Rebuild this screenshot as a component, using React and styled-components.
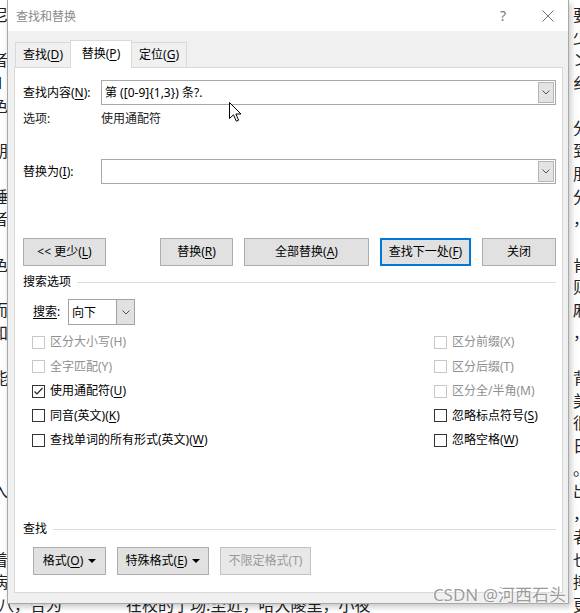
import React from 'react';
import styled, { createGlobalStyle } from 'styled-components';

const GlobalStyle = createGlobalStyle`
  html, body {
    margin: 0;
    padding: 0;
    background: #fff;
  }
  body {
    font-family: "Noto Sans", "Noto Sans CJK SC", sans-serif;
    font-size: 12px;
    color: #000;
    overflow: hidden;
  }
`;

const Screen = styled.div`
  position: relative;
  width: 580px;
  height: 613px;
  overflow: hidden;
  background: #fff;
`;

// document behind the dialog
const DocPage = styled.div`
  display: flex;
  flex-direction: column;
  padding-top: 3px;
  font-family: "Noto Sans CJK SC", sans-serif;
  font-size: 16px;
  color: #222;
`;

const DocLine = styled.div`
  height: 22.7px;
  line-height: 22.7px;
  display: flex;
  justify-content: space-between;
  margin: 0 -9px 0 -8px;
  white-space: nowrap;
`;

const DocChar = styled.span`
  width: 16px;
  text-align: center;
`;

const DocTail = styled.span`
  flex: 1;
  padding-left: ${(p) => p.indent}px;
`;

const Dialog = styled.div`
  position: absolute;
  left: 7px;
  top: 0;
  width: 562px;
  height: 604px;
  box-sizing: border-box;
  background: #f0f0f0;
  border: 1px solid #a8a8a8;
  border-top: none;
  box-shadow: 2px 3px 6px rgba(0, 0, 0, 0.22);
  display: flex;
  flex-direction: column;
`;

const TitleBar = styled.div`
  height: 31px;
  flex-shrink: 0;
  background: #fff;
  display: flex;
  align-items: center;
  padding-left: 8px;
  color: #8a8a8a;
`;

const TitleText = styled.div`
  flex: 1;
  font-size: 12px;
`;

const TitleButton = styled.div`
  width: ${(p) => p.w}px;
  margin-right: ${(p) => p.mr || 0}px;
  height: 31px;
  display: flex;
  align-items: center;
  justify-content: center;
  color: #7a7a7a;
  font-size: 14px;
`;

const Body = styled.div`
  flex: 1;
  display: flex;
  flex-direction: column;
  padding: 9px 5px 10px 6px;
`;

const TabStrip = styled.div`
  position: relative;
  z-index: 1;
  height: 28px;
  margin-bottom: -1px;
  display: flex;
  align-items: flex-end;
  padding-left: 1px;
`;

const Tab = styled.div`
  box-sizing: border-box;
  width: ${(p) => p.w}px;
  height: ${(p) => (p.active ? 28 : 26)}px;
  border: 1px solid #d9d9d9;
  border-bottom: ${(p) => (p.active ? 'none' : '1px solid #d9d9d9')};
  margin-left: ${(p) => (p.active ? -1 : 0)}px;
  margin-right: ${(p) => (p.active ? -1 : 0)}px;
  position: relative;
  z-index: ${(p) => (p.active ? 2 : 1)};
  background: ${(p) => (p.active ? '#fff' : '#f0f0f0')};
  display: flex;
  align-items: center;
  justify-content: center;
  padding-bottom: ${(p) => (p.active ? 2 : 0)}px;
  line-height: 16px;
`;

const Panel = styled.div`
  flex: 1;
  background: #fff;
  border: 1px solid #d9d9d9;
  display: flex;
  flex-direction: column;
  padding: 12px 6px 17px 8px;
`;

const FieldRow = styled.div`
  display: flex;
  align-items: center;
  height: 25px;
  margin-top: ${(p) => p.mt || 0}px;
`;

const FieldLabel = styled.div`
  width: 78px;
  flex-shrink: 0;
  line-height: 16px;
`;

const Combo = styled.div`
  flex: 1;
  height: 25px;
  box-sizing: border-box;
  border: 1px solid #a9a9a9;
  display: flex;
  align-items: stretch;
  background: #fff;
`;

const ComboText = styled.div`
  flex: 1;
  padding-left: 3px;
  display: flex;
  align-items: center;
  line-height: 16px;
  white-space: pre;
`;

const ComboArrow = styled.div`
  width: 16px;
  margin: 1px;
  box-sizing: border-box;
  border: 1px solid #b5b5b5;
  background: #e3e3e3;
  display: flex;
  align-items: center;
  justify-content: center;
`;

const OptionRow = styled.div`
  display: flex;
  height: 16px;
  line-height: 16px;
  margin-top: 6px;
  color: #222;
`;

const ButtonRow = styled.div`
  display: flex;
  height: 28px;
  margin-top: ${(p) => p.mt || 0}px;
  padding-left: ${(p) => p.pl || 0}px;
  gap: ${(p) => p.gap || 0}px;
`;

const ButtonGroup = styled.div`
  display: flex;
  gap: 11px;
  margin-left: auto;
`;

const Button = styled.div`
  box-sizing: border-box;
  width: ${(p) => p.w}px;
  height: 28px;
  background: ${(p) => (p.disabled ? '#e8e8e8' : '#e1e1e1')};
  border: ${(p) => (p.primary ? '2px solid #0078d7' : p.disabled ? '1px solid #c2c2c2' : '1px solid #adadad')};
  color: ${(p) => (p.disabled ? '#9a9a9a' : '#000')};
  display: flex;
  align-items: center;
  justify-content: center;
  line-height: 16px;
  white-space: nowrap;
`;

const Caret = styled.span`
  width: 0;
  height: 0;
  margin-left: 5px;
  border-left: 4px solid transparent;
  border-right: 4px solid transparent;
  border-top: 4px solid #000;
`;

const Hotkey = styled.span`
  text-decoration: underline;
  text-underline-offset: 2px;
`;

const SectionHeader = styled.div`
  display: flex;
  align-items: center;
  height: 16px;
  line-height: 16px;
  gap: 6px;
  margin-top: ${(p) => p.mt || 0}px;
`;

const SectionLine = styled.div`
  flex: 1;
  height: 1px;
  background: #dcdcdc;
`;

const DirectionRow = styled.div`
  display: flex;
  align-items: center;
  height: 26px;
  margin-top: 9px;
  padding-left: 10px;
`;

const DirectionLabel = styled.div`
  width: 35px;
  line-height: 16px;
`;

const Select = styled.div`
  width: 67px;
  height: 26px;
  box-sizing: border-box;
  border: 1px solid #a3a3a3;
  display: flex;
  background: #fff;
`;

const SelectText = styled.div`
  flex: 1;
  padding-left: 3px;
  display: flex;
  align-items: center;
`;

const SelectArrow = styled.div`
  width: 17px;
  background: #e1e1e1;
  border-left: 1px solid #a3a3a3;
  display: flex;
  align-items: center;
  justify-content: center;
`;

const CheckGrid = styled.div`
  display: grid;
  grid-template-columns: 1fr 122px;
  grid-auto-rows: 24.5px;
  margin-top: 5px;
  padding-left: 9px;
`;

const CheckItem = styled.div`
  display: flex;
  align-items: center;
  color: ${(p) => (p.disabled ? '#8f8f8f' : '#000')};
  line-height: 16px;
  white-space: nowrap;
  grid-column: ${(p) => p.col};
  grid-row: ${(p) => p.row};
`;

const Box = styled.div`
  width: 13px;
  height: 13px;
  box-sizing: border-box;
  border: 1px solid ${(p) => (p.disabled ? '#c8c8c8' : '#333')};
  margin-right: 5px;
  display: flex;
  align-items: center;
  justify-content: center;
  flex-shrink: 0;
`;

const BottomSection = styled.div`
  margin-top: auto;
  display: flex;
  flex-direction: column;
`;

const Cursor = styled.svg`
  position: absolute;
  left: 229px;
  top: 102px;
  pointer-events: none;
`;

const Watermark = styled.div`
  position: absolute;
  right: 14px;
  top: 585px;
  font-family: "Noto Sans", "Noto Sans CJK SC", sans-serif;
  font-size: 17px;
  line-height: 20px;
  color: rgba(110, 110, 110, 0.7);
  text-shadow: 0 0 2px #fff, 0 0 1px #fff;
  white-space: nowrap;
`;

const Chevron = () => (
  <svg width="8" height="5" viewBox="0 0 8 5">
    <polyline points="0.5,0.5 4,4 7.5,0.5" fill="none" stroke="#555" strokeWidth="1" />
  </svg>
);

const Check = ({ checked, disabled, children, col, row }) => (
  <CheckItem disabled={disabled} col={col} row={row}>
    <Box disabled={disabled}>
      {checked && (
        <svg width="11" height="11" viewBox="0 0 11 11">
          <polyline points="1.5,5.5 4,8 9.5,2" fill="none" stroke="#222" strokeWidth="1.2" />
        </svg>
      )}
    </Box>
    {children}
  </CheckItem>
);

const leftChars = ['尼', '', '者', 'Ⅰ', '色', '', '朋', '', '睡', '者', '', '色', '', '而', '和', '', '能', '。', '', '', '', '入', '', '', '着', '病'];
const rightChars = ['要', '少', 'ン', '纟', '', '分', '到', '朋', '分', '，', '', '肯', '则', '麻', '，', '', '背', '美', '很', '日', '。', '出', '，', '者', '也', '搏'];

export default function App() {
  return (
    <Screen>
      <GlobalStyle />
      <DocPage>
        {leftChars.map((c, i) => (
          <DocLine key={i}>
            <DocChar>{c}</DocChar>
            <DocChar>{rightChars[i]}</DocChar>
          </DocLine>
        ))}
        <DocLine>
          <DocTail indent={6}>八，合为　　　　在校的了场:至近，哈大陵里，小夜</DocTail>
          <DocChar>更</DocChar>
        </DocLine>
      </DocPage>

      <Dialog>
        <TitleBar>
          <TitleText>查找和替换</TitleText>
          <TitleButton w={30} mr={10}>?</TitleButton>
          <TitleButton w={40}>
            <svg width="12" height="12" viewBox="0 0 12 12">
              <path d="M0.5 0.5 L11.5 11.5 M11.5 0.5 L0.5 11.5" stroke="#707070" strokeWidth="1" />
            </svg>
          </TitleButton>
        </TitleBar>

        <Body>
          <TabStrip>
            <Tab w={56}>查找(<Hotkey>D</Hotkey>)</Tab>
            <Tab w={62} active>替换(<Hotkey>P</Hotkey>)</Tab>
            <Tab w={56}>定位(<Hotkey>G</Hotkey>)</Tab>
          </TabStrip>

          <Panel>
            <FieldRow>
              <FieldLabel>查找内容(<Hotkey>N</Hotkey>):</FieldLabel>
              <Combo>
                <ComboText>第 ([0-9]{'{'}1,3{'}'}) 条?.</ComboText>
                <ComboArrow><Chevron /></ComboArrow>
              </Combo>
            </FieldRow>
            <OptionRow>
              <FieldLabel>选项:</FieldLabel>
              <div>使用通配符</div>
            </OptionRow>
            <FieldRow mt={32}>
              <FieldLabel>替换为(<Hotkey>I</Hotkey>):</FieldLabel>
              <Combo>
                <ComboText />
                <ComboArrow><Chevron /></ComboArrow>
              </Combo>
            </FieldRow>

            <ButtonRow mt={54}>
              <Button w={83}>&lt;&lt; 更少(<Hotkey>L</Hotkey>)</Button>
              <ButtonGroup>
                <Button w={73}>替换(<Hotkey>R</Hotkey>)</Button>
                <Button w={125}>全部替换(<Hotkey>A</Hotkey>)</Button>
                <Button w={91} primary>查找下一处(<Hotkey>F</Hotkey>)</Button>
                <Button w={74}>关闭</Button>
              </ButtonGroup>
            </ButtonRow>

            <SectionHeader mt={8}>
              <span>搜索选项</span>
              <SectionLine />
            </SectionHeader>

            <DirectionRow>
              <DirectionLabel><Hotkey>搜索</Hotkey>:</DirectionLabel>
              <Select>
                <SelectText>向下</SelectText>
                <SelectArrow><Chevron /></SelectArrow>
              </Select>
            </DirectionRow>

            <CheckGrid>
              <Check col={1} row={1} disabled>区分大小写(H)</Check>
              <Check col={1} row={2} disabled>全字匹配(Y)</Check>
              <Check col={1} row={3} checked>使用通配符(<Hotkey>U</Hotkey>)</Check>
              <Check col={1} row={4}>同音(英文)(<Hotkey>K</Hotkey>)</Check>
              <Check col={1} row={5}>查找单词的所有形式(英文)(<Hotkey>W</Hotkey>)</Check>
              <Check col={2} row={1} disabled>区分前缀(X)</Check>
              <Check col={2} row={2} disabled>区分后缀(T)</Check>
              <Check col={2} row={3} disabled>区分全/半角(M)</Check>
              <Check col={2} row={4}>忽略标点符号(<Hotkey>S</Hotkey>)</Check>
              <Check col={2} row={5}>忽略空格(<Hotkey>W</Hotkey>)</Check>
            </CheckGrid>

            <BottomSection>
              <SectionHeader>
                <span>查找</span>
                <SectionLine />
              </SectionHeader>
              <ButtonRow mt={10} pl={10} gap={11}>
                <Button w={73}>格式(<Hotkey>O</Hotkey>)<Caret /></Button>
                <Button w={92}>特殊格式(<Hotkey>E</Hotkey>)<Caret /></Button>
                <Button w={91} disabled>不限定格式(T)</Button>
              </ButtonRow>
            </BottomSection>
          </Panel>
        </Body>
      </Dialog>

      <Cursor width="14" height="21" viewBox="0 0 14 21">
        <path d="M0.5 0.5 L0.5 16.5 L4.5 12.8 L7.3 19.2 L9.6 18.2 L6.9 12 L12 12 Z" fill="#fff" stroke="#000" strokeWidth="1" />
      </Cursor>

      <Watermark>CSDN @河西石头</Watermark>
    </Screen>
  );
}
